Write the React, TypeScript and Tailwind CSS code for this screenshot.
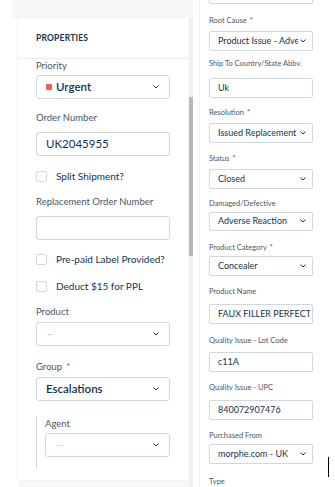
import React from "react";

const font = { fontFamily: 'Lato, "Open Sans", Arial, sans-serif' };

function Chevron({ className = "" }: { className?: string }) {
  return (
    <svg width="6" height="4" viewBox="0 0 6 4" className={className} fill="none">
      <path d="M0.8 0.8 L3 3 L5.2 0.8" stroke="#12344d" strokeWidth="1" strokeLinecap="round" strokeLinejoin="round" />
    </svg>
  );
}

function Checkbox({ label, className }: { label: string; className: string }) {
  return (
    <div className={`flex items-center h-[12px] ${className}`}>
      <span className="w-[11px] h-[11px] rounded-[2px] border border-[#cfd7df] bg-white" />
      <span className="ml-[9px] text-[10px] leading-[12px] text-[#12344d]">{label}</span>
    </div>
  );
}

function LeftLabel({ children, className, required }: { children: React.ReactNode; className: string; required?: boolean }) {
  return (
    <div className={`h-[12px] text-[9.5px] leading-[12px] text-[#475867] ${className}`}>
      {children}
      {required && <span className="ml-[4px] text-[#d72d30]">*</span>}
    </div>
  );
}

function LeftSelect({ children, className, muted }: { children: React.ReactNode; className: string; muted?: boolean }) {
  return (
    <div className={`flex items-center justify-between h-[24px] rounded-[3px] border border-[#cfd7df] bg-white pl-[9px] pr-[10px] ${className}`}>
      <div className={muted ? "text-[9px] text-[#b4bcc5] pl-[1px]" : "flex items-center text-[11.5px] font-semibold text-[#12344d]"}>{children}</div>
      <Chevron />
    </div>
  );
}

function RightLabel({ children, className, required }: { children: React.ReactNode; className: string; required?: boolean }) {
  return (
    <div className={`h-[10px] text-[7.5px] leading-[10px] text-[#475867] whitespace-nowrap ${className}`}>
      {children}
      {required && <span className="ml-[3px] text-[#d72d30]">*</span>}
    </div>
  );
}

function RightField({ value, className, select }: { value: string; className: string; select?: boolean }) {
  return (
    <div className={`flex items-center h-[20px] w-[104px] rounded-[2px] border border-[#cfd7df] bg-white pl-[8px] ${select ? "pr-[6px]" : "pr-[2px]"} ${className}`}>
      <div className="flex-1 overflow-hidden whitespace-nowrap text-[9px] leading-[12px] text-[#12344d]">{value}</div>
      {select && <Chevron className="ml-[2px] shrink-0" />}
    </div>
  );
}

export default function App() {
  return (
    <div className="relative flex w-[335px] h-[487px] overflow-hidden bg-white" style={font}>
      {/* left: properties sidebar */}
      <div className="flex w-[200px] shrink-0">
        <div className="w-[18px] shrink-0 bg-white flex flex-col">
          <div className="h-[18px] ml-[12px] bg-[#f5f7f9]" />
        </div>
        <div className="flex flex-col w-[170px] shrink-0 bg-[#f5f7f9]">
          <div className="h-[18px] shrink-0" />
          <div className="flex flex-col h-[462px] bg-white shadow-[-1px_0_2px_rgba(18,52,77,0.06)]">
            <div className="flex items-center h-[41px] border-b border-[#ebeff3] pl-[18px]">
              <span className="text-[8.5px] font-bold tracking-[0.2px] text-[#12344d]">PROPERTIES</span>
            </div>
            <div className="flex flex-col pl-[18px] pr-[18px]">
              <LeftLabel className="mt-[1px]">Priority</LeftLabel>
              <LeftSelect className="mt-[3px]">
                <span className="w-[6px] h-[6px] bg-[#f25c54] mr-[4px] rounded-[1px]" />
                Urgent
              </LeftSelect>
              <LeftLabel className="mt-[13px]">Order Number</LeftLabel>
              <div className="mt-[8px] flex items-center h-[24px] rounded-[3px] border border-[#cfd7df] pl-[9px] text-[11.5px] text-[#12344d]">UK2045955</div>
              <Checkbox label="Split Shipment?" className="mt-[14px]" />
              <LeftLabel className="mt-[14px]">Replacement Order Number</LeftLabel>
              <div className="mt-[8px] h-[24px] rounded-[3px] border border-[#cfd7df]" />
              <Checkbox label="Pre-paid Label Provided?" className="mt-[13px]" />
              <Checkbox label="Deduct $15 for PPL" className="mt-[15px]" />
              <LeftLabel className="mt-[14px]">Product</LeftLabel>
              <LeftSelect className="mt-[4px]" muted>--</LeftSelect>
              <LeftLabel className="mt-[15px]" required>Group</LeftLabel>
              <LeftSelect className="mt-[4px]">Escalations</LeftSelect>
              <div className="mt-[16px] flex flex-col h-[52px] border-l border-[#cfd7df] pl-[8px]">
                <LeftLabel className="mt-[1px]">Agent</LeftLabel>
                <LeftSelect className="mt-[3px]" muted>--</LeftSelect>
              </div>
            </div>
          </div>
        </div>
        <div className="flex flex-col w-[5px] shrink-0 bg-[#f5f7f9]">
          <div className="h-[18px]" />
          <div className="flex-1 ml-[1px] w-[4px] bg-[#efefef] flex flex-col">
            <div className="h-[79px]" />
            <div className="h-[159px] bg-[#b8b8b8]" />
          </div>
        </div>
        <div className="w-[7px] shrink-0 bg-white border-r border-[#f0f2f4]" />
      </div>

      {/* right: ticket fields */}
      <div className="flex flex-col pl-[9px]">
        <div className="mt-[-16px] h-[20px] w-[104px] rounded-[2px] border border-[#cfd7df]" />
        <RightLabel className="mt-[12px]" required>Root Cause</RightLabel>
        <RightField className="mt-[5px]" value="Product Issue - Adverse Reaction" select />
        <RightLabel className="mt-[8px]">Ship To Country/State Abbv.</RightLabel>
        <RightField className="mt-[9px]" value="Uk" />
        <RightLabel className="mt-[10px]" required>Resolution</RightLabel>
        <RightField className="mt-[5px]" value="Issued Replacement" select />
        <RightLabel className="mt-[11px]" required>Status</RightLabel>
        <RightField className="mt-[5px]" value="Closed" select />
        <RightLabel className="mt-[10px]">Damaged/Defective</RightLabel>
        <RightField className="mt-[3px]" value="Adverse Reaction" select />
        <RightLabel className="mt-[12px]" required>Product Category</RightLabel>
        <RightField className="mt-[3px]" value="Concealer" select />
        <RightLabel className="mt-[11px]">Product Name</RightLabel>
        <RightField className="mt-[7px]" value="FAUX FILLER PERFECTING CONCEALER" />
        <RightLabel className="mt-[12px]">Quality Issue - Lot Code</RightLabel>
        <RightField className="mt-[6px]" value="c11A" />
        <RightLabel className="mt-[11px]">Quality Issue - UPC</RightLabel>
        <RightField className="mt-[7px]" value="840072907476" />
        <RightLabel className="mt-[11px]">Purchased From</RightLabel>
        <RightField className="mt-[3px]" value="morphe.com - UK" select />
        <RightLabel className="mt-[13px]">Type</RightLabel>
      </div>

      {/* text caret */}
      <div className="absolute left-[328px] top-[457px] w-[1px] h-[20px] bg-black" />
    </div>
  );
}
